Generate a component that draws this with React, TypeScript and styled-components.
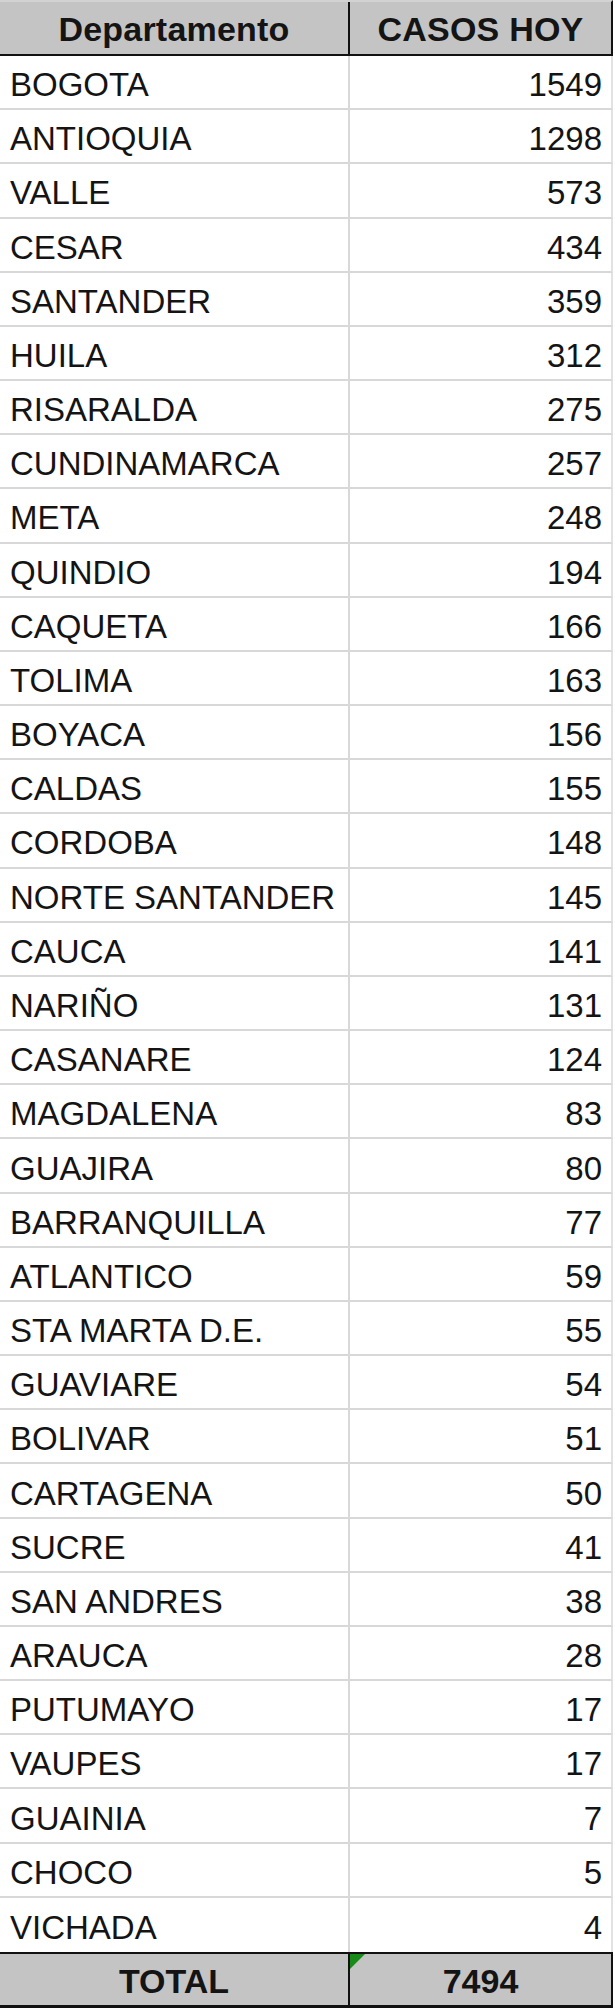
import React from 'react';
import styled, { createGlobalStyle } from 'styled-components';

const GlobalStyle = createGlobalStyle`
  html, body {
    margin: 0;
    padding: 0;
    background: #ffffff;
  }
`;

const rows: [string, number][] = [
  ['BOGOTA', 1549],
  ['ANTIOQUIA', 1298],
  ['VALLE', 573],
  ['CESAR', 434],
  ['SANTANDER', 359],
  ['HUILA', 312],
  ['RISARALDA', 275],
  ['CUNDINAMARCA', 257],
  ['META', 248],
  ['QUINDIO', 194],
  ['CAQUETA', 166],
  ['TOLIMA', 163],
  ['BOYACA', 156],
  ['CALDAS', 155],
  ['CORDOBA', 148],
  ['NORTE SANTANDER', 145],
  ['CAUCA', 141],
  ['NARIÑO', 131],
  ['CASANARE', 124],
  ['MAGDALENA', 83],
  ['GUAJIRA', 80],
  ['BARRANQUILLA', 77],
  ['ATLANTICO', 59],
  ['STA MARTA D.E.', 55],
  ['GUAVIARE', 54],
  ['BOLIVAR', 51],
  ['CARTAGENA', 50],
  ['SUCRE', 41],
  ['SAN ANDRES', 38],
  ['ARAUCA', 28],
  ['PUTUMAYO', 17],
  ['VAUPES', 17],
  ['GUAINIA', 7],
  ['CHOCO', 5],
  ['VICHADA', 4],
];

const Sheet = styled.div`
  width: 613px;
  display: flex;
  flex-direction: column;
  font-family: 'Liberation Sans', Arial, sans-serif;
  color: #141414;
`;

const HeaderRow = styled.div`
  display: grid;
  grid-template-columns: 350px 1fr;
  height: 56px;
  box-sizing: border-box;
  background: #c4c4c4;
  border-top: 2px solid #d2d2d2;
  border-bottom: 2px solid #111;
  border-right: 2px solid #111;
`;

const HeaderCell = styled.div<{ $divider?: boolean }>`
  display: flex;
  align-items: center;
  justify-content: center;
  padding-top: 3px;
  font-size: 34px;
  font-weight: 700;
  letter-spacing: 0.2px;
  border-right: ${(p) => (p.$divider ? '2px solid #111' : 'none')};
`;

const Body = styled.div`
  display: grid;
  grid-template-rows: repeat(35, 1fr);
  height: 1896px;
`;

const DataRow = styled.div`
  display: grid;
  grid-template-columns: 350px 1fr;
  border-bottom: 2px solid #d8d8d8;
  border-right: 2px solid #e2e2e2;
  box-sizing: border-box;

  &:last-child {
    border-bottom: none;
  }
`;

const NameCell = styled.div`
  display: flex;
  align-items: center;
  padding: 6px 0 0 10px;
  font-size: 33px;
  border-right: 2px solid #d8d8d8;
  white-space: nowrap;
`;

const ValueCell = styled.div`
  display: flex;
  align-items: center;
  justify-content: flex-end;
  padding: 6px 9px 0 0;
  font-size: 33px;
`;

const TotalRow = styled.div`
  display: grid;
  grid-template-columns: 350px 1fr;
  height: 56px;
  box-sizing: border-box;
  background: #c4c4c4;
  border-top: 2px solid #111;
  border-bottom: 3px solid #111;
  border-right: 2px solid #111;
`;

const TotalCell = styled.div<{ $flag?: boolean }>`
  position: relative;
  display: flex;
  align-items: center;
  justify-content: center;
  padding-top: 3px;
  font-size: 34px;
  font-weight: 700;
  border-right: ${(p) => (p.$flag ? 'none' : '2px solid #111')};

  &::before {
    content: '';
    display: ${(p) => (p.$flag ? 'block' : 'none')};
    position: absolute;
    top: 0;
    left: 0;
    border-top: 15px solid #178a17;
    border-right: 15px solid transparent;
  }
`;

function App(): React.JSX.Element {
  return (
    <>
      <GlobalStyle />
      <Sheet>
        <HeaderRow>
          <HeaderCell $divider>Departamento</HeaderCell>
          <HeaderCell>CASOS HOY</HeaderCell>
        </HeaderRow>
        <Body>
          {rows.map(([name, value]) => (
            <DataRow key={name}>
              <NameCell>{name}</NameCell>
              <ValueCell>{value}</ValueCell>
            </DataRow>
          ))}
        </Body>
        <TotalRow>
          <TotalCell>TOTAL</TotalCell>
          <TotalCell $flag>7494</TotalCell>
        </TotalRow>
      </Sheet>
    </>
  );
}

export default App;
